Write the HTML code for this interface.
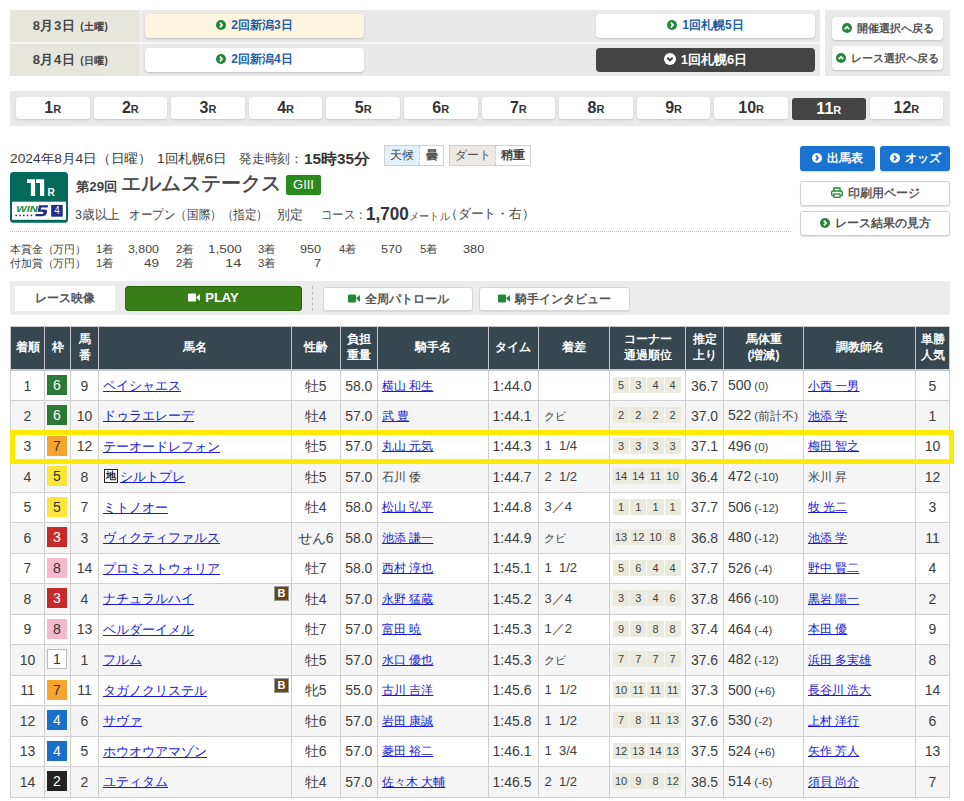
<!DOCTYPE html>
<html lang="ja">
<head>
<meta charset="utf-8">
<style>
*{box-sizing:border-box;margin:0;padding:0}
html,body{width:964px;height:801px;overflow:hidden;background:#fff}
body{font-family:"Liberation Sans",sans-serif;color:#333;position:relative;font-size:13px}
.abs{position:absolute}
.gray{background:#e9e9e9}
.btn{position:absolute;white-space:nowrap;background:#fff;border-radius:4px;box-shadow:0 1px 2px rgba(0,0,0,.18);text-align:center;font-weight:bold}
.ic{display:inline-block;width:10px;height:10px;border-radius:50%;background:#23873a;position:relative;vertical-align:-1px;margin-right:5px}
.ic svg{position:absolute;left:0;top:0;width:100%;height:100%}
.date{position:absolute;left:10px;width:130px;height:32px;background:#e7e6dc;font-weight:bold;font-size:13px;line-height:32px;text-align:center;color:#444;padding-right:9px;letter-spacing:0.5px}
.date small{font-size:10px!important;letter-spacing:0.3px;margin-left:1px}
.date small{font-size:9px;font-weight:bold}
.kbtn{font-size:12px;line-height:23px;color:#1c5fa8;height:24px;width:219px}
.rn{position:absolute;top:97px;width:73.6px;height:22px;background:#fff;border-radius:3px;box-shadow:0 1px 2px rgba(0,0,0,.15);text-align:center;font-weight:bold;font-size:16px;line-height:22px;color:#333}
.rn span{font-size:11px}
.rn.on{background:#444;color:#fff;top:98px;box-shadow:none}
</style>
</head>
<body>
<!-- date nav -->
<div class="abs gray" style="left:10px;top:10px;width:810px;height:66px"></div>
<div class="abs" style="left:10px;top:42px;width:810px;height:2px;background:#f5f5f5"></div>
<div class="abs" style="left:140px;top:10px;width:1px;height:66px;background:#f5f5f5"></div>
<div class="date" style="top:10px">8月3日 <small>(土曜)</small></div>
<div class="date" style="top:44px">8月4日 <small>(日曜)</small></div>
<div class="btn kbtn" style="left:145px;top:14px;background:#fdf5e0"><i class="ic"><svg viewBox="0 0 11 11"><path d="M4.3 3 L6.6 5.5 L4.3 8" stroke="#fff" stroke-width="2" fill="none"/></svg></i>2回新潟3日</div>
<div class="btn kbtn" style="left:145px;top:48px"><i class="ic"><svg viewBox="0 0 11 11"><path d="M4.3 3 L6.6 5.5 L4.3 8" stroke="#fff" stroke-width="2" fill="none"/></svg></i>2回新潟4日</div>
<div class="btn kbtn" style="left:596px;top:14px"><i class="ic"><svg viewBox="0 0 11 11"><path d="M4.3 3 L6.6 5.5 L4.3 8" stroke="#fff" stroke-width="2" fill="none"/></svg></i>1回札幌5日</div>
<div class="btn kbtn" style="left:596px;top:48px;background:#444;color:#fff;font-size:13px;box-shadow:none"><i class="ic" style="background:#fff;width:12px;height:12px"><svg viewBox="0 0 11 11"><path d="M3 4.3 L5.5 6.6 L8 4.3" stroke="#444" stroke-width="2" fill="none"/></svg></i>1回札幌6日</div>

<div class="abs gray" style="left:825px;top:10px;width:125px;height:66px"></div>
<div class="btn" style="left:832px;top:17px;width:111px;height:23px;font-size:11px;line-height:23px;color:#555"><i class="ic"><svg viewBox="0 0 11 11"><path d="M3 6.6 L5.5 4.3 L8 6.6" stroke="#fff" stroke-width="2" fill="none"/></svg></i>開催選択へ戻る</div>
<div class="btn" style="left:832px;top:46px;width:111px;height:24px;font-size:11px;line-height:24px;color:#555"><i class="ic"><svg viewBox="0 0 11 11"><path d="M3 6.6 L5.5 4.3 L8 6.6" stroke="#fff" stroke-width="2" fill="none"/></svg></i>レース選択へ戻る</div>

<!-- race nav -->
<div class="abs gray" style="left:10px;top:91px;width:940px;height:35px"></div>
<div class="rn" style="left:16px">1<span>R</span></div>
<div class="rn" style="left:93.6px">2<span>R</span></div>
<div class="rn" style="left:171.2px">3<span>R</span></div>
<div class="rn" style="left:248.8px">4<span>R</span></div>
<div class="rn" style="left:326.4px">5<span>R</span></div>
<div class="rn" style="left:404px">6<span>R</span></div>
<div class="rn" style="left:481.6px">7<span>R</span></div>
<div class="rn" style="left:559.2px">8<span>R</span></div>
<div class="rn" style="left:636.8px">9<span>R</span></div>
<div class="rn" style="left:714.4px">10<span>R</span></div>
<div class="rn on" style="left:792px">11<span>R</span></div>
<div class="rn" style="left:869.6px">12<span>R</span></div>



<!-- race header -->
<style>
.s{position:absolute;white-space:nowrap;transform-origin:0 0;line-height:20px}
.wb{position:absolute;top:145px;height:21px;border:1px solid #d0d0d0;font-size:12px;line-height:19px;color:#333;white-space:nowrap}
.wb span{display:inline-block;height:19px;text-align:center;vertical-align:top}
.rbtn{position:absolute;white-space:nowrap;left:800px;width:150px;height:25px;background:#fff;border:1px solid #cfcfcf;border-radius:3px;box-shadow:0 1px 1px rgba(0,0,0,.12);font-size:11.5px;font-weight:bold;line-height:23px;text-align:center;color:#555}
.bbtn{position:absolute;white-space:nowrap;top:146px;height:25px;background:#1a73d0;border-radius:3px;color:#fff;font-size:12px;font-weight:bold;line-height:25px;text-align:center;box-shadow:0 1px 1px rgba(0,0,0,.15)}
</style>
<div class="s" id="d1" style="left:10.00px;top:148.5px;font-size:13px;font-weight:normal;color:#3a3a3a;transform:scaleX(1.0556)">2024年8月4日（日曜）</div>
<div class="s" id="d2" style="left:156.95px;top:148.5px;font-size:13px;font-weight:normal;color:#3a3a3a;transform:scaleX(1.0476)">1回札幌6日</div>
<div class="s" id="d3" style="left:239.00px;top:148.5px;font-size:13px;font-weight:normal;color:#444;transform:scaleX(0.9833)">発走時刻：</div>
<div class="s" id="d4" style="left:303.94px;top:148.5px;font-size:14.5px;font-weight:bold;color:#333;transform:scaleX(1.0574)">15時35分</div>
<div class="s" id="t1" style="left:76.00px;top:177.0px;font-size:13px;font-weight:bold;color:#444;transform:scaleX(1.0256)">第29回</div>
<div class="s" id="t2" style="left:120.50px;top:173.0px;font-size:20px;font-weight:normal;color:#444;-webkit-text-stroke:0.5px #444;transform:scaleX(1.0032)">エルムステークス</div>
<div class="s" id="c1" style="left:75.04px;top:205.0px;font-size:13px;font-weight:normal;color:#444;transform:scaleX(0.9644)">3歳以上</div>
<div class="s" id="c2" style="left:129.11px;top:205.0px;font-size:13px;font-weight:normal;color:#444;transform:scaleX(0.8912)">オープン（国際）（指定）</div>
<div class="s" id="c3" style="left:276.71px;top:205.0px;font-size:13px;font-weight:normal;color:#444;transform:scaleX(0.9875)">別定</div>
<div class="s" id="c4" style="left:321.24px;top:204.5px;font-size:13px;font-weight:normal;color:#555;transform:scaleX(0.8800)">コース：</div>
<div class="s" id="c5" style="left:365.65px;top:203.7px;font-size:18px;font-weight:bold;color:#333;transform:scaleX(0.9500)">1,700</div>
<div class="s" id="c6" style="left:409.07px;top:206.0px;font-size:11px;font-weight:normal;color:#555;transform:scaleX(0.9302)">メートル</div>
<div class="s" id="c7" style="left:445.11px;top:204.0px;font-size:13px;font-weight:normal;color:#444;transform:scaleX(0.9867)">（ダート・右）</div>
<div class="s" id="p1" style="left:9.90px;top:238.7px;font-size:11px;font-weight:normal;color:#444;transform:scaleX(0.9871)">本賞金（万円）</div>
<div class="s" id="p2" style="left:96.17px;top:238.7px;font-size:11px;font-weight:normal;color:#444;transform:scaleX(1.0250)">1着</div>
<div class="s" id="p3" style="left:128.40px;top:238.5px;font-size:11px;font-weight:normal;color:#444;transform:scaleX(1.1222)">3,800</div>
<div class="s" id="p4" style="left:176.30px;top:238.7px;font-size:11px;font-weight:normal;color:#444;transform:scaleX(1.0412)">2着</div>
<div class="s" id="p5" style="left:207.57px;top:238.5px;font-size:11px;font-weight:normal;color:#444;transform:scaleX(1.2269)">1,500</div>
<div class="s" id="p6" style="left:257.60px;top:238.7px;font-size:11px;font-weight:normal;color:#444;transform:scaleX(1.0235)">3着</div>
<div class="s" id="p7" style="left:300.20px;top:238.5px;font-size:11px;font-weight:normal;color:#444;transform:scaleX(1.1500)">950</div>
<div class="s" id="p8" style="left:339.00px;top:238.7px;font-size:11px;font-weight:normal;color:#444;transform:scaleX(1.0118)">4着</div>
<div class="s" id="p9" style="left:381.30px;top:238.5px;font-size:11px;font-weight:normal;color:#444;transform:scaleX(1.1500)">570</div>
<div class="s" id="p10" style="left:419.50px;top:238.7px;font-size:11px;font-weight:normal;color:#444;transform:scaleX(1.0294)">5着</div>
<div class="s" id="p11" style="left:462.50px;top:238.5px;font-size:11px;font-weight:normal;color:#444;transform:scaleX(1.1556)">380</div>
<div class="s" id="q1" style="left:9.90px;top:253.4px;font-size:11px;font-weight:normal;color:#444;transform:scaleX(0.9871)">付加賞（万円）</div>
<div class="s" id="q2" style="left:96.17px;top:253.4px;font-size:11px;font-weight:normal;color:#444;transform:scaleX(1.0250)">1着</div>
<div class="s" id="q3" style="left:144.00px;top:253.2px;font-size:11px;font-weight:normal;color:#444;transform:scaleX(1.2250)">49</div>
<div class="s" id="q4" style="left:176.30px;top:253.4px;font-size:11px;font-weight:normal;color:#444;transform:scaleX(1.0412)">2着</div>
<div class="s" id="q5" style="left:224.66px;top:253.2px;font-size:11px;font-weight:normal;color:#444;transform:scaleX(1.3364)">14</div>
<div class="s" id="q6" style="left:257.60px;top:253.4px;font-size:11px;font-weight:normal;color:#444;transform:scaleX(1.0235)">3着</div>
<div class="s" id="q7" style="left:314.00px;top:253.2px;font-size:11px;font-weight:normal;color:#444;transform:scaleX(1.1500)">7</div>
<div class="wb" style="left:384px;width:60px"><span style="width:35px;background:#e3f1fb;border-right:1px dashed #ccc;color:#444">天候</span><span style="width:23px;color:#555;font-weight:bold">曇</span></div>
<div class="wb" style="left:449px;width:82px"><span style="width:46px;background:#edeae5;border-right:1px dashed #ccc;color:#555">ダート</span><span style="width:34px;font-weight:bold;color:#444">稍重</span></div>

<svg class="abs" style="left:10px;top:172px" width="58" height="51" viewBox="0 0 58 51">
<rect x="0" y="0" width="58" height="50.7" rx="3.5" fill="#03695a"/>
<path d="M17 7.2 H25.1 V23.9 H20.9 V11 H17 Z M26.1 7.2 H34.2 V23.9 H30 V11 H26.1 Z" fill="#fff"/>
<text x="37.6" y="23.9" font-family="Liberation Sans" font-weight="bold" font-size="10.2" fill="#fff">R</text>
<rect x="2" y="29.7" width="54" height="18.1" fill="#fff"/>
<rect x="41.2" y="32.9" width="11.5" height="11.8" fill="#1e2f8a"/>
<text x="47" y="42.2" text-anchor="middle" font-family="Liberation Sans" font-size="10" fill="#fff">4</text>
<text x="6.3" y="40.2" font-family="Liberation Sans" font-weight="bold" font-style="italic" font-size="9.5" textLength="21.5" lengthAdjust="spacingAndGlyphs" fill="#1a8a3a">WIN</text>
<path d="M29 33.3 H38.2 L37.6 35.4 H31.3 L30.6 37.6 H34.5 Q37.6 37.6 37 40.5 Q36.3 44.2 32 44.2 H25.2 L25.8 42.1 H31.5 Q33.1 42.1 33.3 40.9 Q33.5 39.7 32.2 39.7 H27.5 Z" fill="#1e2f8a"/>
<g fill="#1e2f8a"><circle cx="6.2" cy="43.4" r=".85"/><circle cx="10" cy="43.4" r=".85"/><circle cx="13.8" cy="43.4" r=".85"/><circle cx="17.6" cy="43.4" r=".85"/><circle cx="21.4" cy="43.4" r=".85"/></g>
</svg>
<div class="abs" style="left:286px;top:175px;width:35px;height:20px;background:#2a8a1e;border-radius:2px;color:#fff;font-size:13px;line-height:20px;text-align:center">GIII</div>
<div class="abs" style="left:10px;top:231px;width:781px;height:1px;border-top:1px dotted #bbb"></div>

<div class="bbtn" style="left:800px;width:75px"><i class="ic" style="background:#fff"><svg viewBox="0 0 11 11"><path d="M4.3 3 L6.6 5.5 L4.3 8" stroke="#1a73d0" stroke-width="2" fill="none"/></svg></i>出馬表</div>
<div class="bbtn" style="left:880px;width:70px"><i class="ic" style="background:#fff"><svg viewBox="0 0 11 11"><path d="M4.3 3 L6.6 5.5 L4.3 8" stroke="#1a73d0" stroke-width="2" fill="none"/></svg></i>オッズ</div>
<div class="rbtn" style="top:181px"><svg width="12" height="11" viewBox="0 0 12 11" style="vertical-align:-1px;margin-right:5px"><path d="M3 4 V1 H9 V4" fill="none" stroke="#23873a" stroke-width="1.4"/><rect x="0.7" y="4" width="10.6" height="4.6" rx="1.2" fill="none" stroke="#23873a" stroke-width="1.4"/><rect x="3" y="7" width="6" height="3.3" fill="#fff" stroke="#23873a" stroke-width="1.3"/></svg>印刷用ページ</div>
<div class="rbtn" style="top:211px"><i class="ic"><svg viewBox="0 0 11 11"><path d="M4.3 3 L6.6 5.5 L4.3 8" stroke="#fff" stroke-width="2" fill="none"/></svg></i>レース結果の見方</div>
<!-- video -->
<div class="abs gray" style="left:10px;top:281px;width:940px;height:34px;background:#ececec"></div>
<div class="abs" style="left:15px;top:286px;width:100px;height:25px;background:#fff;font-size:12px;font-weight:bold;line-height:25px;text-align:center;color:#555">レース映像</div>
<div class="abs" style="left:125px;top:286px;width:177px;height:25px;background:#3a7d18;border:1px solid #2c6410;border-radius:3px;color:#fff;font-size:13px;font-weight:bold;line-height:21px;text-align:center"><svg width="12" height="9" viewBox="0 0 12 9" style="margin-right:5px"><rect x="0" y="0.5" width="8" height="8" rx="1" fill="#fff"/><path d="M8 4.5 L12 1 L12 8 Z" fill="#fff"/></svg>PLAY</div>
<div class="abs" style="left:312px;top:286px;width:1px;height:25px;border-left:1px dashed #bbb"></div>
<div class="abs" style="left:323px;top:287px;width:150px;height:24px;background:#fff;border:1px solid #d5d5d5;border-radius:3px;font-size:11.5px;font-weight:bold;line-height:22px;text-align:center;color:#555;box-shadow:0 1px 1px rgba(0,0,0,.08)"><svg width="12" height="9" viewBox="0 0 12 9" style="margin-right:5px"><rect x="0" y="0.5" width="8" height="8" rx="1" fill="#23873a"/><path d="M8 4.5 L12 1 L12 8 Z" fill="#23873a"/></svg>全周パトロール</div>
<div class="abs" style="left:479px;top:287px;width:151px;height:24px;background:#fff;border:1px solid #d5d5d5;border-radius:3px;font-size:11.5px;font-weight:bold;line-height:22px;text-align:center;color:#555;box-shadow:0 1px 1px rgba(0,0,0,.08)"><svg width="12" height="9" viewBox="0 0 12 9" style="margin-right:5px"><rect x="0" y="0.5" width="8" height="8" rx="1" fill="#23873a"/><path d="M8 4.5 L12 1 L12 8 Z" fill="#23873a"/></svg>騎手インタビュー</div>


<!-- result table -->
<style>
table.res{position:absolute;left:10px;top:326px;width:939.5px;border-collapse:collapse;table-layout:fixed;font-size:14px;color:#3d3d3d}
table.res th{background:#37474f;color:#fff;font-size:12px;font-weight:bold;line-height:16px;height:43.5px;border:1px solid #c8c8c8;border-bottom:2px solid #c8c8c8;text-align:center;padding:0 0 2px 0}
table.res td{height:30.5px;border:1px solid #cfcfcf;padding:0 0 0 4px;white-space:nowrap;line-height:16px}
table.res tr.g td{background:#f5f5f5}
table.res td.c{text-align:center;padding:0}
table.res a{color:#1a1ad6;text-decoration:underline}
.wk{display:inline-block;width:20px;height:20px;line-height:20px;font-style:normal;text-align:center;font-size:14px;vertical-align:middle;position:relative;top:-0.5px;left:-0.5px}
.w1{background:#fff;border:1px solid #bbb;line-height:18px;color:#333}
.w2{background:#222;color:#fff}
.w3{background:#c62b2b;color:#fff}
.w4{background:#1b6fc8;color:#fff}
.w5{background:#fde53a;color:#333}
.w6{background:#2a7a35;color:#fff}
.w7{background:#f8a530;color:#333}
.w8{background:#f6b8cb;color:#333}
.nm{position:relative}
.nm a{font-size:13px}
td.jk{font-size:12px}
table.res td.sx{font-size:13px}
.chi{display:inline-block;font-style:normal;width:14px;height:14px;border:1.5px solid #222;background:#fff;font-size:10px;font-weight:bold;line-height:11px;text-align:center;margin-right:3px;vertical-align:1px;color:#222;position:relative;left:1px;top:-1px}
.bl{position:absolute;right:2px;top:2px;width:15px;height:15px;background:#6b4718;border:1px solid #999;color:#fff;font-style:normal;font-weight:bold;font-size:11px;line-height:13px;text-align:center}
td.cor i{display:inline-block;width:16.2px;height:16px;margin-right:1px;background:#eaeadf;font-style:normal;font-size:11px;line-height:16px;text-align:center;color:#444;vertical-align:2px}
td.cor{padding-left:3px!important}
td.bw small{font-size:11.5px;margin-left:3px;color:#444}
td.mg{font-size:13px;padding-left:6px!important}
</style>
<table class="res">
<colgroup><col style="width:34px"><col style="width:26px"><col style="width:28px"><col style="width:193px"><col style="width:48.5px"><col style="width:37.5px"><col style="width:110.5px"><col style="width:50px"><col style="width:71.5px"><col style="width:76px"><col style="width:38px"><col style="width:80px"><col style="width:112px"><col style="width:34px"></colgroup>
<tr><th>着順</th><th>枠</th><th>馬<br>番</th><th>馬名</th><th>性齢</th><th>負担<br>重量</th><th>騎手名</th><th>タイム</th><th>着差</th><th>コーナー<br>通過順位</th><th>推定<br>上り</th><th>馬体重<br>(増減)</th><th>調教師名</th><th>単勝<br>人気</th></tr>
<tr><td class="c">1</td><td class="c"><i class="wk w6">6</i></td><td class="c">9</td><td class="nm"><a>ペイシャエス</a></td><td class="c">牡5</td><td class="c">58.0</td><td class="jk"><a>横山 和生</a></td><td class="tm">1:44.0</td><td class="mg"></td><td class="cor"><i>5</i><i>3</i><i>4</i><i>4</i></td><td class="c">36.7</td><td class="bw">500<small>(0)</small></td><td class="jk"><a>小西 一男</a></td><td class="c">5</td></tr>
<tr class="g"><td class="c">2</td><td class="c"><i class="wk w6">6</i></td><td class="c">10</td><td class="nm"><a>ドゥラエレーデ</a></td><td class="c">牡4</td><td class="c">57.0</td><td class="jk"><a>武 豊</a></td><td class="tm">1:44.1</td><td class="mg" style="font-size:11px;padding-left:5px!important">クビ</td><td class="cor"><i>2</i><i>2</i><i>2</i><i>2</i></td><td class="c">37.0</td><td class="bw">522<small>(前計不)</small></td><td class="jk"><a>池添 学</a></td><td class="c">1</td></tr>
<tr><td class="c">3</td><td class="c"><i class="wk w7">7</i></td><td class="c">12</td><td class="nm"><a>テーオードレフォン</a></td><td class="c">牡5</td><td class="c">57.0</td><td class="jk"><a>丸山 元気</a></td><td class="tm">1:44.3</td><td class="mg">1&nbsp;&nbsp;1/4</td><td class="cor"><i>3</i><i>3</i><i>3</i><i>3</i></td><td class="c">37.1</td><td class="bw">496<small>(0)</small></td><td class="jk"><a>梅田 智之</a></td><td class="c">10</td></tr>
<tr class="g"><td class="c">4</td><td class="c"><i class="wk w5">5</i></td><td class="c">8</td><td class="nm"><i class="chi">地</i><a>シルトプレ</a></td><td class="c">牡5</td><td class="c">57.0</td><td class="jk">石川 倭</td><td class="tm">1:44.7</td><td class="mg">2&nbsp;&nbsp;1/2</td><td class="cor"><i>14</i><i>14</i><i>11</i><i>10</i></td><td class="c">36.4</td><td class="bw">472<small>(-10)</small></td><td class="jk">米川 昇</td><td class="c">12</td></tr>
<tr><td class="c">5</td><td class="c"><i class="wk w5">5</i></td><td class="c">7</td><td class="nm"><a>ミトノオー</a></td><td class="c">牡4</td><td class="c">58.0</td><td class="jk"><a>松山 弘平</a></td><td class="tm">1:44.8</td><td class="mg">3／4</td><td class="cor"><i>1</i><i>1</i><i>1</i><i>1</i></td><td class="c">37.7</td><td class="bw">506<small>(-12)</small></td><td class="jk"><a>牧 光二</a></td><td class="c">3</td></tr>
<tr class="g"><td class="c">6</td><td class="c"><i class="wk w3">3</i></td><td class="c">3</td><td class="nm"><a>ヴィクティファルス</a></td><td class="c">せん6</td><td class="c">58.0</td><td class="jk"><a>池添 謙一</a></td><td class="tm">1:44.9</td><td class="mg" style="font-size:11px;padding-left:5px!important">クビ</td><td class="cor"><i>13</i><i>12</i><i>10</i><i>8</i></td><td class="c">36.8</td><td class="bw">480<small>(-12)</small></td><td class="jk"><a>池添 学</a></td><td class="c">11</td></tr>
<tr><td class="c">7</td><td class="c"><i class="wk w8">8</i></td><td class="c">14</td><td class="nm"><a>プロミストウォリア</a></td><td class="c">牡7</td><td class="c">58.0</td><td class="jk"><a>西村 淳也</a></td><td class="tm">1:45.1</td><td class="mg">1&nbsp;&nbsp;1/2</td><td class="cor"><i>5</i><i>6</i><i>4</i><i>4</i></td><td class="c">37.7</td><td class="bw">526<small>(-4)</small></td><td class="jk"><a>野中 賢二</a></td><td class="c">4</td></tr>
<tr class="g"><td class="c">8</td><td class="c"><i class="wk w3">3</i></td><td class="c">4</td><td class="nm"><a>ナチュラルハイ</a><i class="bl">B</i></td><td class="c">牡4</td><td class="c">57.0</td><td class="jk"><a>永野 猛蔵</a></td><td class="tm">1:45.2</td><td class="mg">3／4</td><td class="cor"><i>3</i><i>3</i><i>4</i><i>6</i></td><td class="c">37.8</td><td class="bw">466<small>(-10)</small></td><td class="jk"><a>黒岩 陽一</a></td><td class="c">2</td></tr>
<tr><td class="c">9</td><td class="c"><i class="wk w8">8</i></td><td class="c">13</td><td class="nm"><a>ベルダーイメル</a></td><td class="c">牡7</td><td class="c">57.0</td><td class="jk"><a>富田 暁</a></td><td class="tm">1:45.3</td><td class="mg">1／2</td><td class="cor"><i>9</i><i>9</i><i>8</i><i>8</i></td><td class="c">37.4</td><td class="bw">464<small>(-4)</small></td><td class="jk"><a>本田 優</a></td><td class="c">9</td></tr>
<tr class="g"><td class="c">10</td><td class="c"><i class="wk w1">1</i></td><td class="c">1</td><td class="nm"><a>フルム</a></td><td class="c">牡5</td><td class="c">57.0</td><td class="jk"><a>水口 優也</a></td><td class="tm">1:45.3</td><td class="mg" style="font-size:11px;padding-left:5px!important">クビ</td><td class="cor"><i>7</i><i>7</i><i>7</i><i>7</i></td><td class="c">37.6</td><td class="bw">482<small>(-12)</small></td><td class="jk"><a>浜田 多実雄</a></td><td class="c">8</td></tr>
<tr><td class="c">11</td><td class="c"><i class="wk w7">7</i></td><td class="c">11</td><td class="nm"><a>タガノクリステル</a><i class="bl">B</i></td><td class="c">牝5</td><td class="c">55.0</td><td class="jk"><a>古川 吉洋</a></td><td class="tm">1:45.6</td><td class="mg">1&nbsp;&nbsp;1/2</td><td class="cor"><i>10</i><i>11</i><i>11</i><i>11</i></td><td class="c">37.3</td><td class="bw">500<small>(+6)</small></td><td class="jk"><a>長谷川 浩大</a></td><td class="c">14</td></tr>
<tr class="g"><td class="c">12</td><td class="c"><i class="wk w4">4</i></td><td class="c">6</td><td class="nm"><a>サヴァ</a></td><td class="c">牡6</td><td class="c">57.0</td><td class="jk"><a>岩田 康誠</a></td><td class="tm">1:45.8</td><td class="mg">1&nbsp;&nbsp;1/2</td><td class="cor"><i>7</i><i>8</i><i>11</i><i>13</i></td><td class="c">37.6</td><td class="bw">530<small>(-2)</small></td><td class="jk"><a>上村 洋行</a></td><td class="c">6</td></tr>
<tr><td class="c">13</td><td class="c"><i class="wk w4">4</i></td><td class="c">5</td><td class="nm"><a>ホウオウアマゾン</a></td><td class="c">牡6</td><td class="c">57.0</td><td class="jk"><a>菱田 裕二</a></td><td class="tm">1:46.1</td><td class="mg">1&nbsp;&nbsp;3/4</td><td class="cor"><i>12</i><i>13</i><i>14</i><i>13</i></td><td class="c">37.5</td><td class="bw">524<small>(+6)</small></td><td class="jk"><a>矢作 芳人</a></td><td class="c">13</td></tr>
<tr class="g"><td class="c">14</td><td class="c"><i class="wk w2">2</i></td><td class="c">2</td><td class="nm"><a>ユティタム</a></td><td class="c">牡4</td><td class="c">57.0</td><td class="jk"><a>佐々木 大輔</a></td><td class="tm">1:46.5</td><td class="mg">2&nbsp;&nbsp;1/2</td><td class="cor"><i>10</i><i>9</i><i>8</i><i>12</i></td><td class="c">38.5</td><td class="bw">514<small>(-6)</small></td><td class="jk"><a>須貝 尚介</a></td><td class="c">7</td></tr>
</table>
<div class="abs" style="left:10px;top:430px;width:944px;height:34px;border:5px solid #ffea00"></div>

</body>
</html>
